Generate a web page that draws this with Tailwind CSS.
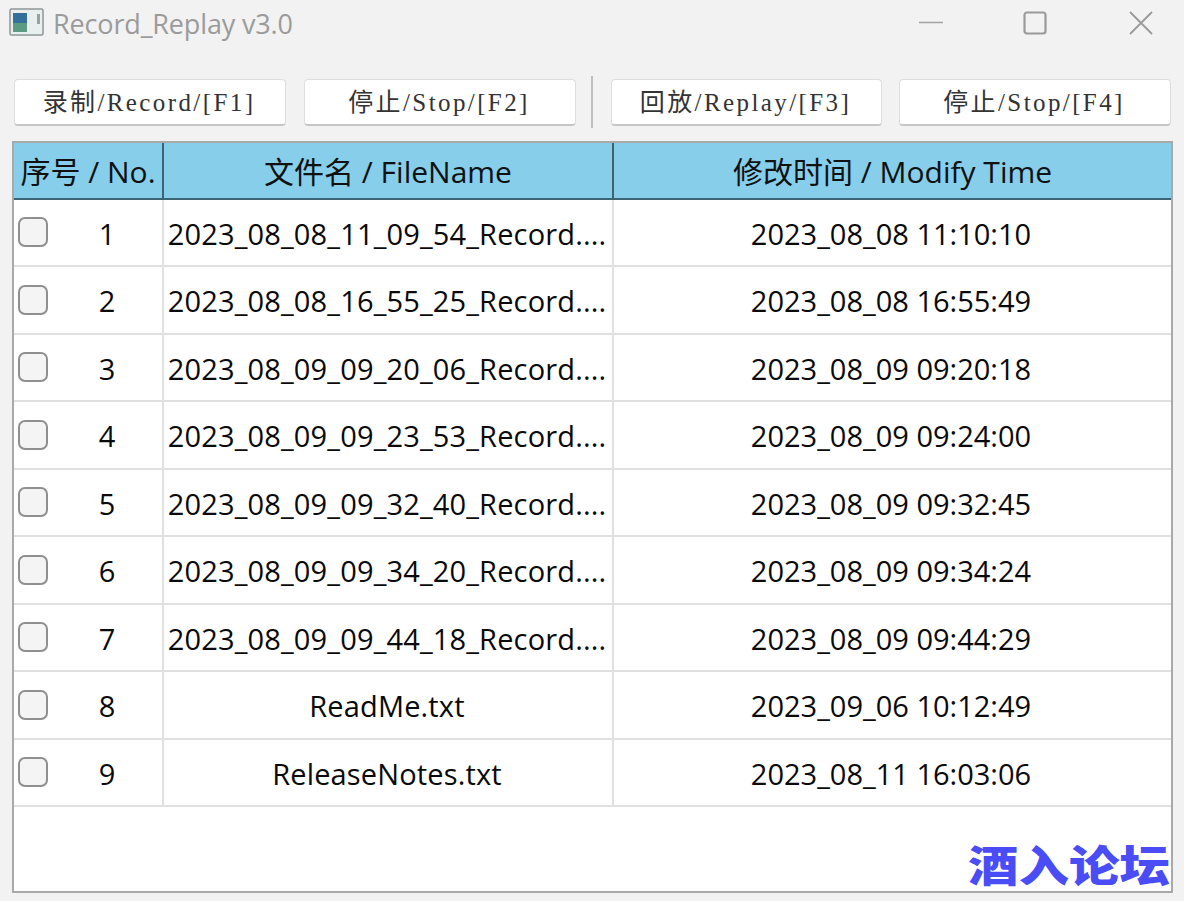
<!DOCTYPE html>
<html lang="en">

<head>
    <meta charset="UTF-8">
    <title>Record_Replay v3.0</title>
    <script src="https://cdn.jsdelivr.net/npm/@tailwindcss/browser@4"></script>
</head>

<body class="bg-[#f2f2f2] font-['Open_Sans','Noto_Sans_CJK_SC',sans-serif]">
    <div class="relative w-[1184px] h-[901px] overflow-hidden">

        <!-- Title bar -->
        <div class="h-[50px] flex items-center pl-[9px]">
            <svg class="w-[35px] h-[28px] mb-[6px]" viewBox="0 0 35 28">
                <rect x="1" y="1" width="33" height="26" rx="1.5" fill="#e9efee" stroke="#8f9797" stroke-width="1.5"/>
                <rect x="4" y="5" width="14" height="10" fill="#35709a"/>
                <rect x="4" y="15" width="14" height="9" fill="#5d9a84"/>
                <rect x="28" y="6" width="3" height="10" fill="#9a9f9f"/>
            </svg>
            <span class="ml-[9px] text-[27px] tracking-[-0.15px] text-[#9b9b9b] mb-[1px]">Record_Replay v3.0</span>
            <div class="ml-auto flex items-center mb-[4px]">
                <svg class="w-[26px] h-[26px]" viewBox="0 0 26 26"><path d="M0 12.5h24" stroke="#a3a3a3" stroke-width="1.5"/></svg>
                <svg class="w-[24px] h-[24px] ml-[78px]" viewBox="0 0 24 24"><rect x="1.5" y="1.5" width="21" height="21" rx="2.5" fill="none" stroke="#9a9a9a" stroke-width="2.2"/></svg>
                <svg class="w-[26px] h-[26px] ml-[81px] mr-[30px]" viewBox="0 0 26 26"><path d="M2 2l22 22M24 2L2 24" stroke="#9a9a9a" stroke-width="1.8"/></svg>
            </div>
        </div>

        <!-- Toolbar -->
        <div class="h-[78px] pt-[29px] pl-[14px] flex items-start font-['Liberation_Serif','Noto_Sans_CJK_SC',serif] text-[25px] text-[#333]">
            <button class="w-[272px] h-[47px] pt-[1px] pr-[2px] bg-white rounded-[4px] border border-[#dedede] border-b-2 border-b-[#c6c6c6] tracking-[2.4px]">录制/Record/[F1]</button>
            <button class="w-[272px] h-[47px] pt-[1px] pr-[2px] ml-[18px] bg-white rounded-[4px] border border-[#dedede] border-b-2 border-b-[#c6c6c6] tracking-[2.4px]">停止/Stop/[F2]</button>
            <div class="w-[2px] h-[52px] -mt-[3px] ml-[15px] bg-[#bdbdbd]"></div>
            <button class="w-[271px] h-[47px] pt-[1px] pr-[2px] ml-[18px] bg-white rounded-[4px] border border-[#dedede] border-b-2 border-b-[#c6c6c6] tracking-[2.4px]">回放/Replay/[F3]</button>
            <button class="w-[272px] h-[47px] pt-[1px] pr-[2px] ml-[17px] bg-white rounded-[4px] border border-[#dedede] border-b-2 border-b-[#c6c6c6] tracking-[2.4px]">停止/Stop/[F4]</button>
        </div>

        <!-- Table -->
        <div class="ml-[12px] mt-[13px] w-[1161px] h-[752px] bg-white border-2 border-[#a9a9a9] text-[29px] text-[#0a0a0a]">

            <!-- Header -->
            <div class="h-[56.5px] flex bg-[#87ceeb] border-b-2 border-[#3d6473] text-[30px] text-[#111]">
                <div class="w-[150px] shrink-0 border-r-2 border-[#3d6473] flex items-center justify-center whitespace-nowrap pt-[2px]">序号 / No.</div>
                <div class="w-[450px] shrink-0 border-r-2 border-[#3d6473] flex items-center justify-center pt-[2px]">文件名 / FileName</div>
                <div class="flex-1 flex items-center justify-center pt-[2px]">修改时间 / Modify Time</div>
            </div>

            <!-- Rows -->
            <div class="h-[67.5px] flex border-b-2 border-[#e0e0e0]">
                <div class="w-[150px] shrink-0 border-r-2 border-[#e0e0e0] flex items-center pl-[4px]"><span class="w-[30px] h-[30px] rounded-[7px] bg-[#f4f4f4] border-2 border-[#8f8f8f]"></span><span class="w-[84px] ml-[17px] text-center pt-[2px]">1</span></div>
                <div class="w-[450px] shrink-0 border-r-2 border-[#e0e0e0] flex items-center justify-center pt-[2px] pr-[2px] tracking-[0.15px]">2023_08_08_11_09_54_Record....</div>
                <div class="flex-1 flex items-center justify-center pt-[2px] pr-[3px]">2023_08_08 11:10:10</div>
            </div>
            <div class="h-[67.5px] flex border-b-2 border-[#e0e0e0]">
                <div class="w-[150px] shrink-0 border-r-2 border-[#e0e0e0] flex items-center pl-[4px]"><span class="w-[30px] h-[30px] rounded-[7px] bg-[#f4f4f4] border-2 border-[#8f8f8f]"></span><span class="w-[84px] ml-[17px] text-center pt-[2px]">2</span></div>
                <div class="w-[450px] shrink-0 border-r-2 border-[#e0e0e0] flex items-center justify-center pt-[2px] pr-[2px] tracking-[0.15px]">2023_08_08_16_55_25_Record....</div>
                <div class="flex-1 flex items-center justify-center pt-[2px] pr-[3px]">2023_08_08 16:55:49</div>
            </div>
            <div class="h-[67.5px] flex border-b-2 border-[#e0e0e0]">
                <div class="w-[150px] shrink-0 border-r-2 border-[#e0e0e0] flex items-center pl-[4px]"><span class="w-[30px] h-[30px] rounded-[7px] bg-[#f4f4f4] border-2 border-[#8f8f8f]"></span><span class="w-[84px] ml-[17px] text-center pt-[2px]">3</span></div>
                <div class="w-[450px] shrink-0 border-r-2 border-[#e0e0e0] flex items-center justify-center pt-[2px] pr-[2px] tracking-[0.15px]">2023_08_09_09_20_06_Record....</div>
                <div class="flex-1 flex items-center justify-center pt-[2px] pr-[3px]">2023_08_09 09:20:18</div>
            </div>
            <div class="h-[67.5px] flex border-b-2 border-[#e0e0e0]">
                <div class="w-[150px] shrink-0 border-r-2 border-[#e0e0e0] flex items-center pl-[4px]"><span class="w-[30px] h-[30px] rounded-[7px] bg-[#f4f4f4] border-2 border-[#8f8f8f]"></span><span class="w-[84px] ml-[17px] text-center pt-[2px]">4</span></div>
                <div class="w-[450px] shrink-0 border-r-2 border-[#e0e0e0] flex items-center justify-center pt-[2px] pr-[2px] tracking-[0.15px]">2023_08_09_09_23_53_Record....</div>
                <div class="flex-1 flex items-center justify-center pt-[2px] pr-[3px]">2023_08_09 09:24:00</div>
            </div>
            <div class="h-[67.5px] flex border-b-2 border-[#e0e0e0]">
                <div class="w-[150px] shrink-0 border-r-2 border-[#e0e0e0] flex items-center pl-[4px]"><span class="w-[30px] h-[30px] rounded-[7px] bg-[#f4f4f4] border-2 border-[#8f8f8f]"></span><span class="w-[84px] ml-[17px] text-center pt-[2px]">5</span></div>
                <div class="w-[450px] shrink-0 border-r-2 border-[#e0e0e0] flex items-center justify-center pt-[2px] pr-[2px] tracking-[0.15px]">2023_08_09_09_32_40_Record....</div>
                <div class="flex-1 flex items-center justify-center pt-[2px] pr-[3px]">2023_08_09 09:32:45</div>
            </div>
            <div class="h-[67.5px] flex border-b-2 border-[#e0e0e0]">
                <div class="w-[150px] shrink-0 border-r-2 border-[#e0e0e0] flex items-center pl-[4px]"><span class="w-[30px] h-[30px] rounded-[7px] bg-[#f4f4f4] border-2 border-[#8f8f8f]"></span><span class="w-[84px] ml-[17px] text-center pt-[2px]">6</span></div>
                <div class="w-[450px] shrink-0 border-r-2 border-[#e0e0e0] flex items-center justify-center pt-[2px] pr-[2px] tracking-[0.15px]">2023_08_09_09_34_20_Record....</div>
                <div class="flex-1 flex items-center justify-center pt-[2px] pr-[3px]">2023_08_09 09:34:24</div>
            </div>
            <div class="h-[67.5px] flex border-b-2 border-[#e0e0e0]">
                <div class="w-[150px] shrink-0 border-r-2 border-[#e0e0e0] flex items-center pl-[4px]"><span class="w-[30px] h-[30px] rounded-[7px] bg-[#f4f4f4] border-2 border-[#8f8f8f]"></span><span class="w-[84px] ml-[17px] text-center pt-[2px]">7</span></div>
                <div class="w-[450px] shrink-0 border-r-2 border-[#e0e0e0] flex items-center justify-center pt-[2px] pr-[2px] tracking-[0.15px]">2023_08_09_09_44_18_Record....</div>
                <div class="flex-1 flex items-center justify-center pt-[2px] pr-[3px]">2023_08_09 09:44:29</div>
            </div>
            <div class="h-[67.5px] flex border-b-2 border-[#e0e0e0]">
                <div class="w-[150px] shrink-0 border-r-2 border-[#e0e0e0] flex items-center pl-[4px]"><span class="w-[30px] h-[30px] rounded-[7px] bg-[#f4f4f4] border-2 border-[#8f8f8f]"></span><span class="w-[84px] ml-[17px] text-center pt-[2px]">8</span></div>
                <div class="w-[450px] shrink-0 border-r-2 border-[#e0e0e0] flex items-center justify-center pt-[2px] pr-[2px] tracking-[0.15px]">ReadMe.txt</div>
                <div class="flex-1 flex items-center justify-center pt-[2px] pr-[3px]">2023_09_06 10:12:49</div>
            </div>
            <div class="h-[67.5px] flex border-b-2 border-[#e0e0e0]">
                <div class="w-[150px] shrink-0 border-r-2 border-[#e0e0e0] flex items-center pl-[4px]"><span class="w-[30px] h-[30px] rounded-[7px] bg-[#f4f4f4] border-2 border-[#8f8f8f]"></span><span class="w-[84px] ml-[17px] text-center pt-[2px]">9</span></div>
                <div class="w-[450px] shrink-0 border-r-2 border-[#e0e0e0] flex items-center justify-center pt-[2px] pr-[2px] tracking-[0.15px]">ReleaseNotes.txt</div>
                <div class="flex-1 flex items-center justify-center pt-[2px] pr-[3px]">2023_08_11 16:03:06</div>
            </div>
        </div>

        <!-- Watermark over the table corner -->
        <div class="absolute left-[968px] top-[838px] text-[50.5px] leading-[50px] font-black text-[#4a4cf6] font-['Noto_Sans_CJK_SC',sans-serif] whitespace-nowrap scale-y-[0.85]">酒入论坛</div>
    </div>
</body>

</html>
